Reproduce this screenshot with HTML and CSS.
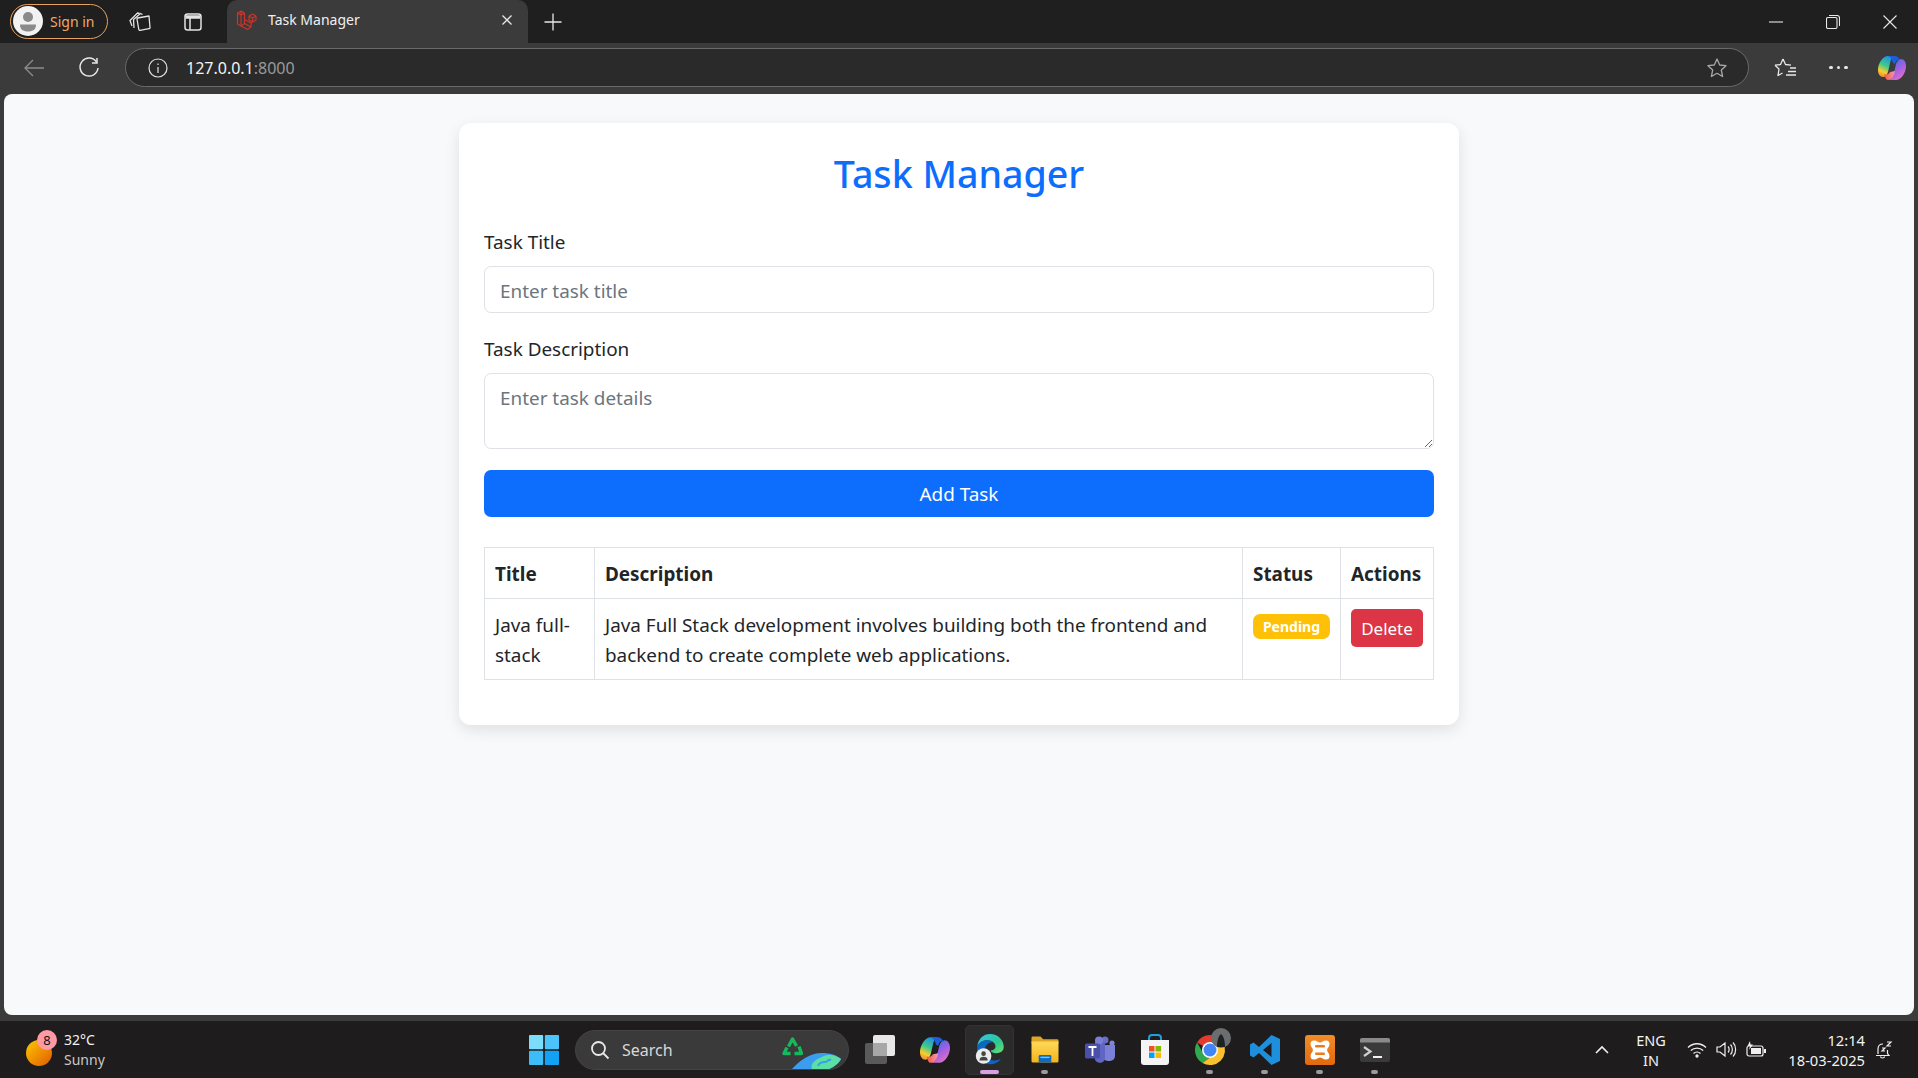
FILE: index.html
```html
<!DOCTYPE html>
<html lang="en">
<head>
    <meta charset="UTF-8">
    <meta name="viewport" content="width=device-width, initial-scale=1.0">
    <title>Task Manager</title>
    <link rel="stylesheet" href="styles.css">
</head>
<body>

    <svg class="defs" width="0" height="0">
        <defs>
            <linearGradient id="cop-a" x1="0.6" y1="0" x2="0.2" y2="1">
                <stop offset="0" stop-color="#1f8fe8"/><stop offset=".45" stop-color="#3fc98a"/><stop offset=".75" stop-color="#f5cf2f"/><stop offset="1" stop-color="#f28a2e"/>
            </linearGradient>
            <linearGradient id="cop-b" x1="0.2" y1="0" x2="0.8" y2="1">
                <stop offset="0" stop-color="#3a6fe6"/><stop offset=".5" stop-color="#a060e4"/><stop offset="1" stop-color="#ee72c0"/>
            </linearGradient>
            <linearGradient id="cop-c" x1="0" y1="0" x2="1" y2="0">
                <stop offset="0" stop-color="#f0573c"/><stop offset="1" stop-color="#f59ab0"/>
            </linearGradient>
            <linearGradient id="edge-a" x1="0" y1="0" x2="1" y2="1">
                <stop offset="0" stop-color="#35c1f1"/><stop offset=".6" stop-color="#2bc78f"/><stop offset="1" stop-color="#6fe06a"/>
            </linearGradient>
            <linearGradient id="sun" x1="0" y1="0" x2="1" y2="1">
                <stop offset="0" stop-color="#ffc800"/><stop offset="1" stop-color="#e05a00"/>
            </linearGradient>
            <linearGradient id="folder" x1="0" y1="0" x2="0" y2="1">
                <stop offset="0" stop-color="#ffd95a"/><stop offset="1" stop-color="#f4b41a"/>
            </linearGradient>
            <linearGradient id="xampp" x1="0" y1="0" x2="0" y2="1">
                <stop offset="0" stop-color="#f28c28"/><stop offset="1" stop-color="#e2690f"/>
            </linearGradient>
            <symbol id="copilot" viewBox="0 0 28 28">
                <path d="M10 2h7c-3 1-4 3-5 7l-2 9c-1 3-3 5-5 5-3 0-5-3-5-7 0-7 5-14 10-14z" fill="url(#cop-a)"/>
                <path d="M18 26h-7c3-1 4-3 5-7l2-9c1-3 3-5 5-5 3 0 5 3 5 7 0 7-5 14-10 14z" fill="url(#cop-b)"/>
                <path d="M6 20c3 1 5 0 6-2l5-1c-1 5-3 9-7 9-2 0-3-3-4-6z" fill="url(#cop-c)"/>
                <path d="M10 2h7c2 0 4 2 5 4-3-1-4 1-5 4l-2-1c-1-3-2-6-5-7z" fill="#1d5fd8"/>
            </symbol>
        </defs>
    </svg>

    <div class="tab-strip">
        <div class="profile-pill">
            <span class="avatar">
                <svg width="26" height="26" viewBox="0 0 26 26"><circle cx="13" cy="9" r="5" fill="#8a8a8a"/><path d="M5 16.5h16c0 5-3 7-8 7s-8-2-8-7z" fill="#8a8a8a"/></svg>
            </span>
            <span>Sign in</span>
        </div>
        <div class="strip-icon">
            <svg width="22" height="22" viewBox="0 0 22 22" fill="none" stroke="#e4e4e4" stroke-width="1.3" stroke-linejoin="round"><path d="M8.5 7 20 5l1 11.500a1 1 0 0 1-1 1.200l-9 1.600a1 1 0 0 1-1.200-.8L8 8a1 1 0 0 1 .5-1z"/><path d="M5 17 4.500 8.500 11.500 2.500l2 1"/><path d="M3 15 1 9.500 8.500 2l2 .5"/></svg>
        </div>
        <div class="strip-icon strip-icon-last">
            <svg width="20" height="20" viewBox="0 0 20 20" fill="none" stroke="#e4e4e4" stroke-width="1.5"><rect x="2" y="2" width="16" height="16" rx="2.5"/><path d="M7 6v12"/><path d="M2.500 5h15" stroke-width="3.5"/></svg>
        </div>
        <div class="tab">
            <svg class="favicon" width="22" height="22" viewBox="0 0 22 22" fill="none" stroke="#c8352b" stroke-width="1.2" stroke-linejoin="round"><path d="M1.500 4 5 2l3.500 2v10.500L15 18l-3.500 2.500L5 17 1.500 15zM5 2v15M1.500 4 5 6l3.500-2M8.500 14.500 5 17M15 18v-4l-6.500-3.500M15 14l5-3V7l-3.500-2-3.500 2v4l3.500 2M13 7l3.500 2L20 7M16.500 9v4"/></svg>
            <span class="tab-title">Task Manager</span>
            <svg class="tab-close" width="12" height="12" viewBox="0 0 12 12" stroke="#e8e8e8" stroke-width="1.3"><path d="M1.500 1.500l9 9M10.500 1.500l-9 9"/></svg>
        </div>
        <div class="new-tab">
            <svg width="18" height="18" viewBox="0 0 18 18" stroke="#e8e8e8" stroke-width="1.3"><path d="M9 .5v17M.5 9h17"/></svg>
        </div>
        <div class="window-controls">
            <svg width="14" height="14" viewBox="0 0 14 14" stroke="#e8e8e8" stroke-width="1.1"><path d="M0 7h14"/></svg>
            <svg width="14" height="14" viewBox="0 0 14 14" fill="none" stroke="#e8e8e8" stroke-width="1.1"><rect x=".5" y="2.500" width="10.500" height="11" rx="1.500"/><path d="M3 .5h8a2.500 2.500 0 0 1 2.500 2.500v8"/></svg>
            <svg width="14" height="14" viewBox="0 0 14 14" stroke="#e8e8e8" stroke-width="1.1"><path d="M.5.500l13 13M13.500.500l-13 13"/></svg>
        </div>
    </div>

    <div class="toolbar">
        <svg class="back" width="20" height="18" viewBox="0 0 20 18" fill="none" stroke="#8c8c8c" stroke-width="1.3"><path d="M20 9H1M9 1 1 9l8 8"/></svg>
        <svg class="reload" width="22" height="22" viewBox="0 0 22 22" fill="none" stroke="#e8e8e8" stroke-width="1.5"><path d="M18.500 5A9 9 0 1 0 20 11"/><path d="M19 1v5h-5"/></svg>
        <div class="address-bar">
            <svg width="20" height="20" viewBox="0 0 20 20" fill="none" stroke="#e4e4e4" stroke-width="1.2"><circle cx="10" cy="10" r="9"/><path d="M10 9v6M10 5.500v1.500"/></svg>
            <span class="url">127.0.0.1<span class="url-port">:8000</span></span>
            <svg class="star" width="22" height="22" viewBox="0 0 22 22" fill="none" stroke="#a8a8a8" stroke-width="1.3" stroke-linejoin="round"><path d="M11 2l2.700 6 6.300.7-4.700 4.300 1.300 6.500L11 16.300 5.400 19.500l1.300-6.500L2 8.700 8.300 8z"/></svg>
        </div>
        <svg class="fav" width="24" height="22" viewBox="0 0 24 22" fill="none" stroke="#e8e8e8" stroke-width="1.3" stroke-linejoin="round"><path d="M10 2l2.500 5.500 5.500.7M2 8.200l5.500-.7L10 2M2 8.200 6 12l-1 6.500 4.500-2.500M17 11h6M15 14.500h8M13 18h10"/></svg>
        <div class="dots"><i></i><i></i><i></i></div>
        <svg class="copilot-top" width="28" height="28"><use href="#copilot"/></svg>
    </div>

    <div class="viewport">
        <div class="card">
            <h1>Task Manager</h1>
            <div class="form-group">
                <label for="task-title">Task Title</label>
                <input type="text" id="task-title" placeholder="Enter task title">
            </div>
            <div class="form-group">
                <label for="task-desc">Task Description</label>
                <textarea id="task-desc" placeholder="Enter task details"></textarea>
            </div>
            <button class="btn-add">Add Task</button>

            <table>
                <thead>
                    <tr>
                        <th class="col-title">Title</th>
                        <th class="col-desc">Description</th>
                        <th class="col-status">Status</th>
                        <th class="col-actions">Actions</th>
                    </tr>
                </thead>
                <tbody>
                    <tr>
                        <td>Java full-stack</td>
                        <td>Java Full Stack development involves building both the frontend and backend to create complete web applications.</td>
                        <td><span class="badge">Pending</span></td>
                        <td><button class="btn-delete">Delete</button></td>
                    </tr>
                </tbody>
            </table>
        </div>
    </div>

    <div class="taskbar">
        <div class="weather">
            <span class="weather-icon">
                <svg width="26" height="26" viewBox="0 0 26 26"><circle cx="13" cy="13" r="13" fill="url(#sun)"/></svg>
                <span class="weather-badge">8</span>
            </span>
            <div class="weather-text">
                <div>32°C</div>
                <div class="weather-sub">Sunny</div>
            </div>
        </div>

        <div class="task-center">
            <svg class="start" width="30" height="30" viewBox="0 0 30 30">
                <rect x="0" y="0" width="14.2" height="14.2" rx="1" fill="#7bdcfb"/>
                <rect x="15.8" y="0" width="14.2" height="14.2" rx="1" fill="#4cc4fa"/>
                <rect x="0" y="15.8" width="14.2" height="14.2" rx="1" fill="#3cbcf9"/>
                <rect x="15.8" y="15.8" width="14.2" height="14.2" rx="1" fill="#13a1f6"/>
            </svg>
            <div class="search-box">
                <svg width="20" height="20" viewBox="0 0 20 20" fill="none" stroke="#e8e8e8" stroke-width="1.8"><circle cx="8.500" cy="8.500" r="6.500"/><path d="M13 13l5.500 5.500"/></svg>
                <span>Search</span>
                <svg class="search-deco" width="66" height="40" viewBox="0 0 66 40">
                    <path d="M6.500 16.500l4-7.500 4 7M17 16.500l2.500 7H12.500M8.500 23.500H2l3-6" fill="none" stroke="#16b95c" stroke-width="3.4" stroke-linejoin="round"/>
                    <path d="M10 39C18 30 28 23 40 23c8 0 15 2 19 6-2 4-7 8-12 10z" fill="#3b9cf0"/>
                    <path d="M30 39c-2-5 3-9 8-11 3-2 9-4 10-3 4 0 8 2 11 4-2 4-7 8-12 10z" fill="#5be0a4"/>
                    <path d="M36 36c1-3 4-4 7-4s3-3 6-2" fill="none" stroke="#3b9cf0" stroke-width="2"/>
                </svg>
            </div>
            <div class="app-icons">
                <div class="app">
                    <svg width="30" height="30" viewBox="0 0 30 30"><rect x="0" y="8" width="22" height="21" rx="2" fill="#5a5a5a"/><rect x="8" y="0" width="22" height="21" rx="2" fill="#e8e8e8"/><rect x="8" y="8" width="14" height="13" fill="#a8a8a8"/></svg>
                </div>
                <div class="app">
                    <svg width="30" height="30"><use href="#copilot"/></svg>
                </div>
                <div class="app app-active">
                    <svg width="30" height="33" viewBox="0 0 32 36">
                        <path d="M2 15C3 6 9 1 16 1c9 0 15 7 15 14 0 5-4 7-8 7-3 0-6-1-6-3 3 0 5-2 5-4 0-4-4-7-9-7-5 0-9 3-11 7z" fill="url(#edge-a)"/>
                        <path d="M2 15c2-5 7-7 11-7 3 0 5 1 6 2-6 0-9 5-9 10 0 6 4 10 10 10 3 0 6-1 8-2-3 4-7 6-12 6C8 34 1 26 2 15z" fill="#0d66c2"/>
                        <circle cx="9" cy="25" r="8.500" fill="#ececec"/>
                        <circle cx="9" cy="22.500" r="2.500" fill="#444"/>
                        <path d="M4.500 30c0-3 2-4 4.500-4s4.500 1 4.500 4z" fill="#444"/>
                    </svg>
                    <i class="dot-active"></i>
                </div>
                <div class="app">
                    <svg width="30" height="27" viewBox="0 0 32 30"><path d="M1 2a1.500 1.500 0 0 1 1.500-1.500H11l3 3h15.500A1.500 1.500 0 0 1 31 5v3H1z" fill="#e0a526"/><path d="M1 6h30v22a1.500 1.500 0 0 1-1.500 1.500h-27A1.500 1.500 0 0 1 1 28z" fill="url(#folder)"/><path d="M9 29.500v-7a1.500 1.500 0 0 1 1.500-1.500h11a1.500 1.500 0 0 1 1.500 1.500v7z" fill="#0f6cbd"/><rect x="11" y="23" width="10" height="1.500" fill="#7cc6f5"/></svg>
                    <i class="dot"></i>
                </div>
                <div class="app">
                    <svg width="32" height="30" viewBox="0 0 32 30"><circle cx="21" cy="5" r="3.500" fill="#6b6fc9"/><circle cx="28" cy="8" r="2.600" fill="#8185d8"/><path d="M18 10h13v11a5 5 0 0 1-5 5h-2a6 6 0 0 1-6-6z" fill="#7b80d6"/><path d="M11 7h10v16a5 5 0 0 1-5 5 6 6 0 0 1-5-3z" fill="#6065c4"/><circle cx="15" cy="5.500" r="4" fill="#7b80d6"/><rect x="1" y="8.500" width="15" height="15" rx="1.500" fill="#4a4fa8"/><path d="M4.500 12h8M8.500 12v9" stroke="#fff" stroke-width="1.8" fill="none"/></svg>
                </div>
                <div class="app">
                    <svg width="30" height="32" viewBox="0 0 30 32"><path d="M9 7V4a3 3 0 0 1 3-3h6a3 3 0 0 1 3 3v3" fill="none" stroke="#1ba1e2" stroke-width="2"/><path d="M1 6h28v22a3 3 0 0 1-3 3H4a3 3 0 0 1-3-3z" fill="#f4f4f4"/><rect x="9" y="12" width="5.500" height="5.500" fill="#f25022"/><rect x="15.500" y="12" width="5.500" height="5.500" fill="#7fba00"/><rect x="9" y="18.500" width="5.500" height="5.500" fill="#00a4ef"/><rect x="15.500" y="18.500" width="5.500" height="5.500" fill="#ffb900"/></svg>
                </div>
                <div class="app">
                    <svg class="chrome" width="30" height="30" viewBox="0 0 30 30">
                        <path d="M15 0A15 15 0 0 1 28 7.500H15a7.500 7.500 0 0 0-6.500 3.750L2 7.500A15 15 0 0 1 15 0z" fill="#e33b2e"/>
                        <path d="M2 7.500 8.500 18.750A7.500 7.500 0 0 0 15 22.500L7.500 28A15 15 0 0 1 2 7.500z" fill="#2fa84f"/>
                        <path d="M28 7.500A15 15 0 0 1 7.500 28L15 22.500A7.500 7.500 0 0 0 15 7.500z" fill="#fbc02d"/>
                        <circle cx="15" cy="15" r="8" fill="#fff"/>
                        <circle cx="15" cy="15" r="6.500" fill="#4285f4"/>
                        <circle cx="26" cy="3" r="10" fill="#6a6e6e"/>
                        <path d="M22 12c0-5 1-11 4-13 3 2 4 8 4 13z" fill="#1f2222"/>
                    </svg>
                    <i class="dot"></i>
                </div>
                <div class="app">
                    <svg width="30" height="30" viewBox="0 0 30 30"><path d="M21.500 0 30 4v22l-8.500 4L9 18l-5.500 4.500L0 20.500V9.500L3.500 7.500 9 12zM21.500 8 13 15l8.500 7z" fill="#1e8fdc" fill-rule="evenodd"/></svg>
                    <i class="dot"></i>
                </div>
                <div class="app">
                    <svg width="30" height="30" viewBox="0 0 30 30"><rect width="30" height="30" rx="3" fill="url(#xampp)"/><path d="M9 5.500c3 0 4 2 6 2s3-2 6-2a3.500 3.500 0 0 1 3.500 3.500c0 3-2.500 4-2.500 6s2.500 3 2.500 6a3.500 3.500 0 0 1-3.500 3.500c-3 0-4-2-6-2s-3 2-6 2A3.500 3.500 0 0 1 5.500 21c0-3 2.500-4 2.500-6S5.500 12 5.500 9A3.500 3.500 0 0 1 9 5.500z" fill="#fff"/><rect x="10" y="10" width="10" height="2.500" rx="1.200" fill="#ee7a1e"/><rect x="10" y="17.500" width="10" height="2.500" rx="1.200" fill="#ee7a1e"/></svg>
                    <i class="dot"></i>
                </div>
                <div class="app">
                    <svg width="30" height="24" viewBox="0 0 30 24"><rect width="30" height="24" rx="2" fill="#3a3a3a"/><path d="M2 0h26a2 2 0 0 1 2 2v2.500H0V2a2 2 0 0 1 2-2z" fill="#8a8a8a"/><path d="M4 9l6.500 4.500L4 18" fill="none" stroke="#cfcfcf" stroke-width="2.2"/><path d="M13 19h9" stroke="#f2f2f2" stroke-width="2"/></svg>
                    <i class="dot"></i>
                </div>
            </div>
        </div>

        <div class="tray">
            <svg class="chevron" width="14" height="9" viewBox="0 0 14 9" fill="none" stroke="#f0f0f0" stroke-width="1.6"><path d="M1 8l6-6 6 6"/></svg>
            <div class="lang">ENG<br>IN</div>
            <svg class="tray-wifi" width="20" height="16" viewBox="0 0 20 16" fill="none" stroke="#f0f0f0" stroke-width="1.3"><path d="M1 5.500c5-5 13-5 18 0M3.800 8.500c3.500-3.300 9-3.300 12.400 0M6.500 11.500c2-1.800 5-1.800 7 0"/><circle cx="10" cy="14" r="1" fill="#f0f0f0"/></svg>
            <svg class="tray-vol" width="21" height="17" viewBox="0 0 21 17" fill="none" stroke="#f0f0f0" stroke-width="1.2"><path d="M1 6v5h3l5 4V2L4 6zM12 5.500c1.500 1.500 1.500 4.500 0 6M14.500 3.500c2.500 2.500 2.500 7.500 0 10M17 1.500c3.500 3.500 3.500 10.500 0 14"/></svg>
            <svg class="tray-bat" width="21" height="18" viewBox="0 0 21 18"><rect x="1" y="5" width="16" height="10" rx="2" fill="none" stroke="#f0f0f0" stroke-width="1.2"/><rect x="5" y="7" width="10" height="6" fill="#f0f0f0"/><rect x="18" y="8" width="2" height="4" fill="#f0f0f0"/><path d="M4 0 1.500 5H4l-1 4 4-5.500H4.500z" fill="#f0f0f0"/></svg>
            <div class="clock">12:14<br>18-03-2025</div>
            <svg class="bell" width="18" height="20" viewBox="0 0 18 20" fill="none" stroke="#f0f0f0" stroke-width="1.2"><path d="M3 14V9c0-3 2-5 5-5M1 15.500h13l-1.500-2V10M5.500 16.500c0 2 4 2 4 0M7 8h3l-3 3h3M12 2h4l-4 4h4"/></svg>
        </div>
    </div>

</body>
</html>
```

FILE: styles.css
```css
* {
    box-sizing: border-box;
}
html, body {
    margin: 0;
    height: 100%;
    overflow: hidden;
}
body {
    display: flex;
    flex-direction: column;
    background-color: #3b3b3b;
    font-family: "Noto Sans", "Open Sans", sans-serif;
    font-size: 18.9px;
    color: #212529;
}
svg {
    display: block;
    flex: none;
}
.defs {
    position: absolute;
}

/* browser tab strip */
.tab-strip {
    display: flex;
    align-items: center;
    height: 43px;
    padding-left: 10px;
    background-color: #1f1f1f;
    color: #e8e8e8;
    font-size: 14px;
}
.profile-pill {
    display: flex;
    align-items: center;
    gap: 7px;
    width: 98px;
    height: 35px;
    margin-bottom: 1px;
    padding-left: 2px;
    border: 1px solid #e8a25f;
    border-radius: 18px;
    color: #f0a868;
}
.avatar {
    display: flex;
    align-items: center;
    justify-content: center;
    width: 30px;
    height: 30px;
    border-radius: 50%;
    background-color: #f2f2f2;
}
.strip-icon {
    display: flex;
    justify-content: center;
    width: 44px;
    margin-left: 10px;
}
.strip-icon-last {
    margin-left: 10px;
    width: 42px;
}
.tab {
    display: flex;
    align-items: center;
    align-self: flex-end;
    width: 301px;
    height: 43px;
    margin-left: 13px;
    padding: 0 15px 4px 9px;
    border-radius: 10px 10px 0 0;
    background-color: #3b3b3b;
    color: #f0f0f0;
}
.favicon {
    margin-right: 10px;
}
.tab-title {
    flex: 1;
}
.new-tab {
    margin-left: 16px;
}
.window-controls {
    display: flex;
    align-items: center;
    gap: 43px;
    margin-left: auto;
    margin-right: 21px;
}

/* address bar row */
.toolbar {
    display: flex;
    align-items: center;
    height: 51px;
    padding: 0 12px 2px 24px;
}
.reload {
    margin-left: 34px;
}
.address-bar {
    display: flex;
    align-items: center;
    width: 1624px;
    height: 39px;
    margin-left: 25px;
    padding: 0 20px 0 22px;
    border: 1px solid #6a6a6a;
    border-radius: 20px;
    background-color: #2a2a2a;
}
.url {
    margin-left: 18px;
    font-size: 16px;
    color: #f4f4f4;
}
.url-port {
    color: #9a9a9a;
}
.star {
    margin-left: auto;
}
.fav {
    margin-left: 24px;
}
.dots {
    display: flex;
    gap: 4px;
    margin-left: 32px;
}
.dots i {
    width: 3.5px;
    height: 3.5px;
    border-radius: 50%;
    background-color: #e8e8e8;
}
.copilot-top {
    margin-left: 30px;
}

/* page content */
.viewport {
    flex: none;
    height: 921px;
    margin: 0 4px;
    padding-top: 29px;
    border-radius: 8px;
    background-color: #f8f9fa;
}
.card {
    width: 1000px;
    margin: 0 auto;
    padding: 25px;
    border-radius: 12px;
    background-color: #fff;
    box-shadow: 0 5px 15px rgba(0, 0, 0, 0.1);
}
h1 {
    margin: 0 0 28px;
    padding-top: 2px;
    font-size: 37.6px;
    font-weight: 500;
    line-height: 48px;
    text-align: center;
    color: #0d6efd;
}
.form-group {
    margin-bottom: 20px;
}
.form-group label {
    display: block;
    margin-bottom: 9px;
    padding-top: 1px;
    line-height: 30px;
}
.form-group input,
.form-group textarea {
    display: block;
    width: 100%;
    padding: 9px 15px 7px;
    border: 1px solid #dee2e6;
    border-radius: 7px;
    font-family: inherit;
    font-size: 18.9px;
    line-height: 30px;
    color: #212529;
    background-color: #fff;
}
.form-group input {
    height: 47px;
}
.form-group textarea {
    height: 76px;
}
::placeholder {
    color: #6c757d;
    opacity: 1;
}
.btn-add {
    display: block;
    width: 100%;
    height: 47px;
    margin-top: 21px;
    padding-top: 2px;
    border: none;
    border-radius: 7px;
    background-color: #0d6efd;
    color: white;
    font-family: inherit;
    font-size: 18.9px;
    cursor: pointer;
}
table {
    width: 100%;
    margin: 30px 0 20px;
    border-collapse: collapse;
    table-layout: fixed;
    line-height: 30px;
}
th, td {
    padding: 11px 10px 9px;
    border: 1px solid #dee2e6;
    text-align: left;
    vertical-align: top;
}
th {
    font-weight: 700;
}
.col-title {
    width: 110px;
}
.col-status {
    width: 98px;
}
.col-actions {
    width: 93px;
}
.badge {
    display: block;
    width: 77px;
    height: 25px;
    margin-top: 4px;
    border-radius: 7px;
    background-color: #ffc107;
    color: white;
    font-size: 14px;
    font-weight: 700;
    line-height: 25px;
    text-align: center;
}
.btn-delete {
    display: block;
    width: 72px;
    height: 38px;
    margin-top: -1px;
    padding: 0;
    border: none;
    border-radius: 5px;
    background-color: #dc3545;
    color: white;
    font-family: inherit;
    font-size: 17px;
    cursor: pointer;
}

/* windows taskbar */
.taskbar {
    flex: none;
    display: grid;
    grid-template-columns: 529px 1fr auto;
    align-items: center;
    height: 57px;
    margin-top: 6px;
    background-color: #1e1c1c;
    color: #f2f2f2;
    font-size: 14px;
}
.weather {
    display: flex;
    align-items: center;
    padding-left: 26px;
}
.weather-icon {
    position: relative;
    margin-top: 6px;
}
.weather-badge {
    position: absolute;
    top: -10px;
    left: 11px;
    width: 20px;
    height: 20px;
    border-radius: 50%;
    background-color: #ff99a4;
    color: #111;
    font-size: 13px;
    line-height: 20px;
    text-align: center;
}
.weather-text {
    margin-left: 12px;
    line-height: 20px;
}
.weather-sub {
    color: #c8c8c8;
}
.task-center {
    display: flex;
    align-items: center;
}
.search-box {
    position: relative;
    display: flex;
    align-items: center;
    gap: 12px;
    width: 274px;
    height: 40px;
    margin-left: 16px;
    padding-left: 14px;
    border: 1px solid #444;
    border-radius: 20px;
    background-color: #3a3a3a;
    color: #d8d8d8;
    font-size: 16px;
    overflow: hidden;
}
.search-deco {
    position: absolute;
    right: 0;
    top: -1px;
}
.app-icons {
    display: flex;
    margin-left: 3px;
}
.app {
    position: relative;
    display: flex;
    align-items: center;
    justify-content: center;
    width: 55px;
    height: 50px;
}
.app-active::before {
    content: "";
    position: absolute;
    top: 0;
    bottom: 0;
    left: 3px;
    right: 3px;
    border: 1px solid #333;
    border-radius: 5px;
    background-color: #2c2b2b;
}
.app-active svg {
    position: relative;
}
.chrome {
    overflow: visible;
}
.dot, .dot-active {
    position: absolute;
    bottom: 1px;
    height: 4px;
    border-radius: 2px;
}
.dot {
    width: 7px;
    background-color: #9a9a9a;
}
.dot-active {
    width: 19px;
    background-color: #d9a0e4;
}
.tray {
    display: flex;
    align-items: center;
    padding-right: 25px;
}
.lang {
    width: 48px;
    margin-left: 18px;
    font-size: 14.5px;
    line-height: 20px;
    text-align: center;
}
.tray-wifi {
    margin-left: 12px;
}
.tray-vol {
    margin-left: 9px;
}
.tray-bat {
    margin-left: 9px;
}
.clock {
    margin-left: 10px;
    width: 88px;
    font-size: 14.7px;
    line-height: 20px;
    text-align: right;
}
.bell {
    margin-left: 10px;
}
```
